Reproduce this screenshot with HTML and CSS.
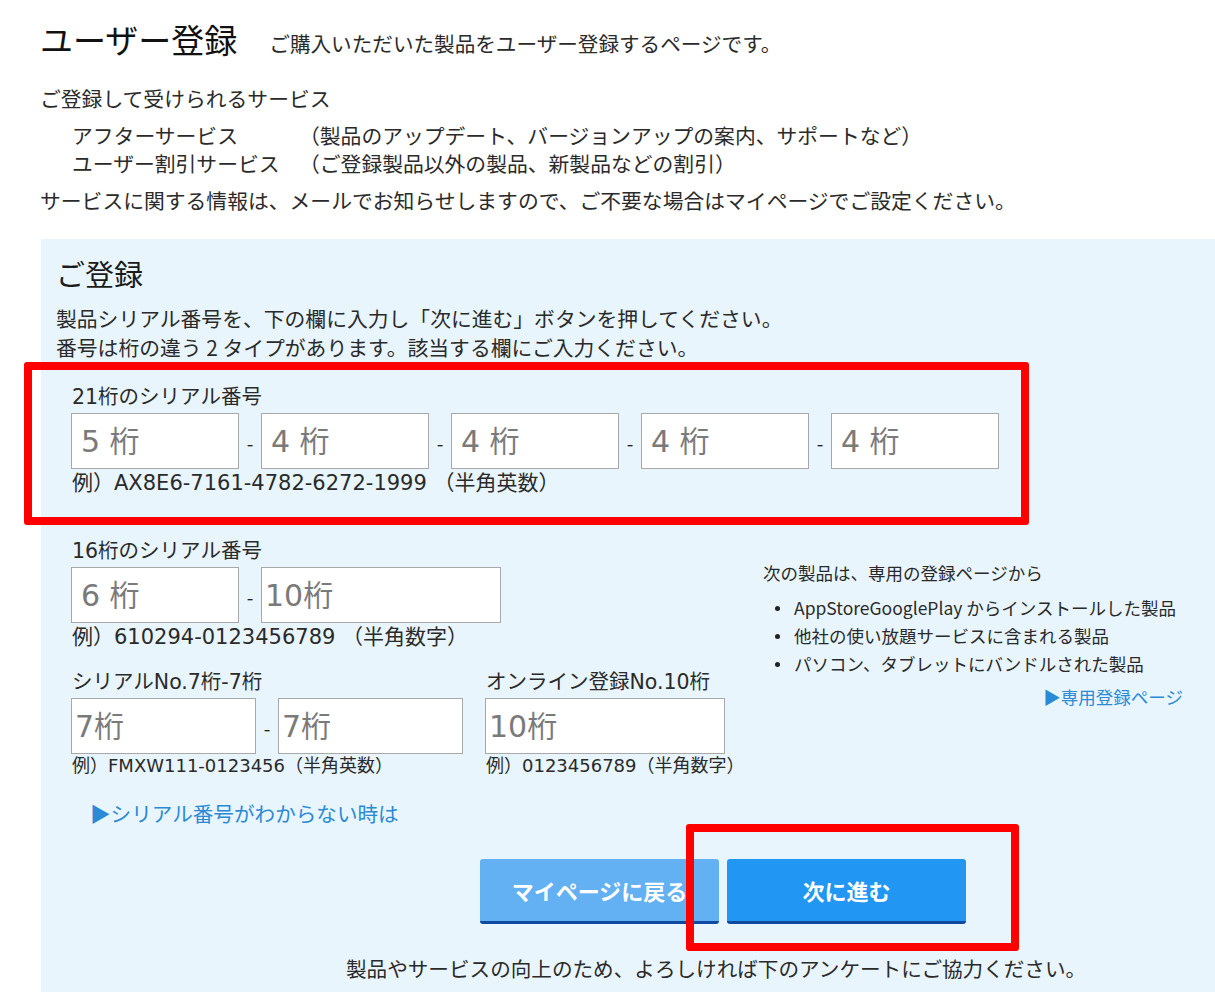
FILE: index.html
```html
<!DOCTYPE html>
<html lang="ja">
<head>
<meta charset="utf-8">
<title>ユーザー登録</title>
<link rel="stylesheet" href="styles.css">
</head>
<body>
<div class="page">
  <header class="head">
    <h1 class="title">ユーザー登録</h1>
    <p class="lead">ご購入いただいた製品をユーザー登録するページです。</p>
  </header>
  <p class="svc-head">ご登録して受けられるサービス</p>
  <dl class="svc">
    <dt>アフターサービス</dt><dd>（製品のアップデート、バージョンアップの案内、サポートなど）</dd>
    <dt>ユーザー割引サービス</dt><dd>（ご登録製品以外の製品、新製品などの割引）</dd>
  </dl>
  <p class="note">サービスに関する情報は、メールでお知らせしますので、ご不要な場合はマイページでご設定ください。</p>

  <section class="panel">
    <h2 class="panel-title">ご登録</h2>
    <p class="intro">製品シリアル番号を、下の欄に入力し「次に進む」ボタンを押してください。<br>番号は桁の違う 2 タイプがあります。該当する欄にご入力ください。</p>

    <div class="serial">
      <div class="label">21桁のシリアル番号</div>
      <div class="inputs">
        <input class="box w168 pad" placeholder="5 桁">
        <span class="dash">-</span>
        <input class="box w168 pad" placeholder="4 桁">
        <span class="dash">-</span>
        <input class="box w168 pad" placeholder="4 桁">
        <span class="dash">-</span>
        <input class="box w168 pad" placeholder="4 桁">
        <span class="dash">-</span>
        <input class="box w168 pad" placeholder="4 桁">
      </div>
      <div class="ex">例）AX8E6-7161-4782-6272-1999 （半角英数）</div>
    </div>

    <div class="row">
      <div class="left">
        <div class="serial">
          <div class="label">16桁のシリアル番号</div>
          <div class="inputs">
            <input class="box w168 pad" placeholder="6 桁">
            <span class="dash">-</span>
            <input class="box w240 tight" placeholder="10桁">
          </div>
          <div class="ex">例）610294-0123456789 （半角数字）</div>
        </div>
        <div class="pair">
          <div class="serial">
            <div class="label">シリアルNo.7桁-7桁</div>
            <div class="inputs">
              <input class="box w185 tight" placeholder="7桁">
              <span class="dash">-</span>
              <input class="box w185 tight" placeholder="7桁">
            </div>
            <div class="ex small">例）FMXW111-0123456（半角英数）</div>
          </div>
          <div class="serial">
            <div class="label">オンライン登録No.10桁</div>
            <div class="inputs">
              <input class="box w240 tight" placeholder="10桁">
            </div>
            <div class="ex small">例）0123456789（半角数字）</div>
          </div>
        </div>
      </div>
      <aside class="other">
        <p class="other-head">次の製品は、専用の登録ページから</p>
        <ul class="other-list">
          <li>AppStoreGooglePlay からインストールした製品</li>
          <li>他社の使い放題サービスに含まれる製品</li>
          <li>パソコン、タブレットにバンドルされた製品</li>
        </ul>
        <div class="other-link"><a href="#">▶専用登録ページ</a></div>
      </aside>
    </div>

    <a class="help" href="#">▶シリアル番号がわからない時は</a>

    <div class="actions">
      <button class="btn back" type="button">マイページに戻る</button>
      <button class="btn next" type="button">次に進む</button>
    </div>

    <p class="survey">製品やサービスの向上のため、よろしければ下のアンケートにご協力ください。</p>
  </section>
</div>
<div class="mark mark-serial"></div>
<div class="mark mark-next"></div>
</body>
</html>
```

FILE: styles.css
```css
html, body {
  margin: 0;
  padding: 0;
  background: #ffffff;
}
body {
  position: relative;
  overflow: hidden;
  font-family: "Noto Sans CJK JP", "Noto Sans", sans-serif;
  color: #2a2a2a;
}
.page {
  padding-left: 40px;
}
p, h1, h2, dl, dd, dt, ul {
  margin: 0;
  padding: 0;
}

.head {
  display: flex;
  align-items: flex-end;
  height: 40px;
  padding-top: 19px;
}
.title {
  font-size: 33px;
  line-height: 40px;
  font-weight: 400;
  color: #111;
}
.lead {
  margin-left: 32px;
  font-size: 20.6px;
  line-height: 32px;
}
.svc-head {
  margin-top: 25px;
  font-size: 20.8px;
  line-height: 28px;
}
.svc {
  margin-top: 9px;
  padding-left: 32px;
  display: grid;
  grid-template-columns: 227px auto;
  font-size: 20.8px;
  line-height: 28px;
}
.note {
  margin-top: 9px;
  font-size: 20.8px;
  line-height: 28px;
}

.panel {
  margin-top: 25px;
  margin-left: 1px;
  background: #e9f5fc;
  padding: 16px 0 20px 15px;
}
.panel-title {
  font-size: 29px;
  line-height: 36px;
  font-weight: 400;
  color: #1a1a1a;
}
.intro {
  margin-top: 13px;
  font-size: 20.8px;
  line-height: 29px;
}

.serial {
  padding-left: 15px;
  margin-top: 22px;
}
.label {
  font-family: "DejaVu Sans", "Noto Sans CJK JP", sans-serif;
  font-size: 20.5px;
  line-height: 26px;
  padding-left: 1px;
}
.inputs {
  display: flex;
  margin-top: 3px;
  height: 56px;
}
.box {
  box-sizing: border-box;
  height: 56px;
  border: 1px solid #a9a9a9;
  background: #fff;
  font-family: "DejaVu Sans", "Noto Sans CJK JP", sans-serif;
  font-size: 30px;
  color: #333;
  margin: 0;
  border-radius: 0;
  outline: none;
}
.box::placeholder {
  color: #7a7a7a;
}
.pad { padding: 0 9px; }
.tight { padding: 0 3px; }
.w168 { width: 168px; }
.w185 { width: 185px; }
.w240 { width: 240px; }
.dash {
  width: 22px;
  height: 56px;
  text-align: center;
  font-size: 19px;
  line-height: 52px;
  padding-top: 4px;
  box-sizing: border-box;
  color: #222;
}
.ex {
  margin-top: 2px;
  font-family: "DejaVu Sans", "Noto Sans CJK JP", sans-serif;
  font-size: 21px;
  line-height: 24px;
  padding-left: 1px;
}
.ex.small {
  margin-top: 1px;
  font-size: 18px;
  line-height: 22px;
}

.row {
  display: flex;
  margin-top: 43px;
}
.row .serial {
  margin-top: 0;
}
.left {
  width: 707px;
  flex: 0 0 auto;
}
.pair {
  display: flex;
  gap: 22px;
  margin-top: 20px;
}
.pair .serial + .serial {
  padding-left: 0;
}

.other {
  width: 422px;
  padding-top: 23px;
}
.other-head {
  font-size: 17.5px;
  line-height: 24px;
}
.other-list {
  margin-top: 9px;
  list-style: none;
  font-size: 17.5px;
  line-height: 28px;
}
.other-list li {
  position: relative;
  padding-left: 31px;
}
.other-list li::before {
  content: "";
  position: absolute;
  left: 12px;
  top: 12px;
  width: 5px;
  height: 5px;
  border-radius: 50%;
  background: #222;
}
.other-link {
  margin-top: 7px;
  text-align: right;
  padding-right: 2px;
  font-size: 17.5px;
  line-height: 24px;
}
.other-link a, .help {
  color: #2a8ad6;
  text-decoration: none;
}

.help {
  display: block;
  margin-top: 22px;
  margin-left: 34px;
  font-size: 20.6px;
  line-height: 28px;
}

.actions {
  display: flex;
  gap: 8px;
  margin-top: 32px;
  padding-left: 424px;
}
.btn {
  width: 239px;
  height: 65px;
  border: none;
  border-bottom: 3px solid #0e4aa0;
  border-radius: 3px;
  color: #ffffff;
  font-family: "Noto Sans CJK JP", "Noto Sans", sans-serif;
  font-size: 22px;
  font-weight: 700;
  padding: 0;
  cursor: pointer;
}
.back { background: #63b0f2; }
.next { background: #2196f3; }

.survey {
  margin-top: 30px;
  padding-left: 290px;
  font-size: 20.6px;
  line-height: 28px;
}

.mark {
  position: absolute;
  box-sizing: border-box;
  border: 8px solid #ff0000;
  border-radius: 3px;
}
.mark-serial {
  left: 24px;
  top: 362px;
  width: 1005px;
  height: 163px;
}
.mark-next {
  left: 686px;
  top: 824px;
  width: 333px;
  height: 127px;
}
```
